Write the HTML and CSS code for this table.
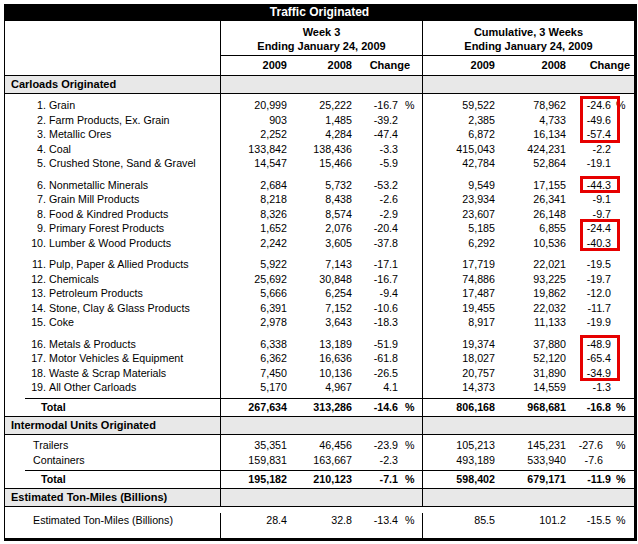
FILE: index.html
```html
<!DOCTYPE html>
<html lang="en">
<head>
<meta charset="utf-8">
<title>Traffic Originated</title>
<link rel="stylesheet" href="styles.css">
</head>
<body>
<div class="sheet">
  <div class="title">Traffic Originated</div>

  <div class="head">
    <div class="h-lab"></div>
    <div class="h-grp wk">Week 3<br>Ending January 24, 2009</div>
    <div class="h-grp cu">Cumulative, 3 Weeks<br>Ending January 24, 2009</div>
    <div class="h-yr">2009</div>
    <div class="h-yr">2008</div>
    <div class="h-yr">Change</div>
    <div class="h-yr">2009</div>
    <div class="h-yr">2008</div>
    <div class="h-yr">Change</div>
  </div>

  <div class="band hd"><div class="lab">Carloads Originated</div><div></div><div></div></div>
  <div class="band g4"><div></div><div></div><div></div></div>

  <div class="row"><div><span class="n">1.</span>Grain</div><div>20,999</div><div>25,222</div><div>-16.7<i class="p">%</i></div><div>59,522</div><div>78,962</div><div class="hl t">-24.6<i class="p">%</i></div></div>
  <div class="row"><div><span class="n">2.</span>Farm Products, Ex. Grain</div><div>903</div><div>1,485</div><div>-39.2</div><div>2,385</div><div>4,733</div><div class="hl">-49.6</div></div>
  <div class="row"><div><span class="n">3.</span>Metallic Ores</div><div>2,252</div><div>4,284</div><div>-47.4</div><div>6,872</div><div>16,134</div><div class="hl b">-57.4</div></div>
  <div class="row"><div><span class="n">4.</span>Coal</div><div>133,842</div><div>138,436</div><div>-3.3</div><div>415,043</div><div>424,231</div><div>-2.2</div></div>
  <div class="row"><div><span class="n">5.</span>Crushed Stone, Sand &amp; Gravel</div><div>14,547</div><div>15,466</div><div>-5.9</div><div>42,784</div><div>52,864</div><div>-19.1</div></div>

  <div class="band g7"><div></div><div></div><div></div></div>

  <div class="row"><div><span class="n">6.</span>Nonmetallic Minerals</div><div>2,684</div><div>5,732</div><div>-53.2</div><div>9,549</div><div>17,155</div><div class="hl t b">-44.3</div></div>
  <div class="row"><div><span class="n">7.</span>Grain Mill Products</div><div>8,218</div><div>8,438</div><div>-2.6</div><div>23,934</div><div>26,341</div><div>-9.1</div></div>
  <div class="row"><div><span class="n">8.</span>Food &amp; Kindred Products</div><div>8,326</div><div>8,574</div><div>-2.9</div><div>23,607</div><div>26,148</div><div>-9.7</div></div>
  <div class="row"><div><span class="n">9.</span>Primary Forest Products</div><div>1,652</div><div>2,076</div><div>-20.4</div><div>5,185</div><div>6,855</div><div class="hl t">-24.4</div></div>
  <div class="row"><div><span class="n">10.</span>Lumber &amp; Wood Products</div><div>2,242</div><div>3,605</div><div>-37.8</div><div>6,292</div><div>10,536</div><div class="hl b">-40.3</div></div>

  <div class="band g7"><div></div><div></div><div></div></div>

  <div class="row"><div><span class="n">11.</span>Pulp, Paper &amp; Allied Products</div><div>5,922</div><div>7,143</div><div>-17.1</div><div>17,719</div><div>22,021</div><div>-19.5</div></div>
  <div class="row"><div><span class="n">12.</span>Chemicals</div><div>25,692</div><div>30,848</div><div>-16.7</div><div>74,886</div><div>93,225</div><div>-19.7</div></div>
  <div class="row"><div><span class="n">13.</span>Petroleum Products</div><div>5,666</div><div>6,254</div><div>-9.4</div><div>17,487</div><div>19,862</div><div>-12.0</div></div>
  <div class="row"><div><span class="n">14.</span>Stone, Clay &amp; Glass Products</div><div>6,391</div><div>7,152</div><div>-10.6</div><div>19,455</div><div>22,032</div><div>-11.7</div></div>
  <div class="row"><div><span class="n">15.</span>Coke</div><div>2,978</div><div>3,643</div><div>-18.3</div><div>8,917</div><div>11,133</div><div>-19.9</div></div>

  <div class="band g7"><div></div><div></div><div></div></div>

  <div class="row"><div><span class="n">16.</span>Metals &amp; Products</div><div>6,338</div><div>13,189</div><div>-51.9</div><div>19,374</div><div>37,880</div><div class="hl t">-48.9</div></div>
  <div class="row"><div><span class="n">17.</span>Motor Vehicles &amp; Equipment</div><div>6,362</div><div>16,636</div><div>-61.8</div><div>18,027</div><div>52,120</div><div class="hl">-65.4</div></div>
  <div class="row"><div><span class="n">18.</span>Waste &amp; Scrap Materials</div><div>7,450</div><div>10,136</div><div>-26.5</div><div>20,757</div><div>31,890</div><div class="hl b">-34.9</div></div>
  <div class="row"><div><span class="n">19.</span>All Other Carloads</div><div>5,170</div><div>4,967</div><div>4.1</div><div>14,373</div><div>14,559</div><div>-1.3</div></div>

  <div class="band g35"><div></div><div></div><div></div></div>

  <div class="row total"><div>Total</div><div>267,634</div><div>313,286</div><div>-14.6<i class="p">%</i></div><div>806,168</div><div>968,681</div><div>-16.8<i class="p">%</i></div></div>

  <div class="band hd"><div class="lab">Intermodal Units Originated</div><div></div><div></div></div>
  <div class="band g3"><div></div><div></div><div></div></div>

  <div class="row plain"><div>Trailers</div><div>35,351</div><div>46,456</div><div>-23.9<i class="p">%</i></div><div>105,213</div><div>145,231</div><div class="sh">-27.6<i class="p">%</i></div></div>
  <div class="row plain"><div>Containers</div><div>159,831</div><div>163,667</div><div>-2.3</div><div>493,189</div><div>533,940</div><div class="sh">-7.6</div></div>

  <div class="band g3"><div></div><div></div><div></div></div>

  <div class="row total"><div>Total</div><div>195,182</div><div>210,123</div><div>-7.1<i class="p">%</i></div><div>598,402</div><div>679,171</div><div>-11.9<i class="p">%</i></div></div>

  <div class="band hd"><div class="lab">Estimated Ton-Miles (Billions)</div><div></div><div></div></div>

  <div class="row plain est"><div>Estimated Ton-Miles (Billions)</div><div>28.4</div><div>32.8</div><div>-13.4<i class="p">%</i></div><div>85.5</div><div>101.2</div><div>-15.5<i class="p">%</i></div></div>
</div>
</body>
</html>
```

FILE: styles.css
```css
* { box-sizing: border-box; }

html, body {
  margin: 0;
  padding: 0;
  background: #fff;
}

body {
  font-family: "Liberation Sans", Arial, sans-serif;
  font-size: 10.7px;
  color: #000;
}

.sheet {
  width: 633px;
  margin: 4px 0 0 4px;
  border-left: 1px solid #000;
  border-right: 3px solid #000;
  border-bottom: 3px solid #000;
}

.title {
  height: 17px;
  line-height: 17px;
  background: #000;
  color: #fff;
  font-weight: bold;
  font-size: 12px;
  text-align: center;
}

/* ---------- column header ---------- */
.head {
  display: grid;
  grid-template-columns: 216px 74px 65px 63px 82px 70px 59px;
  grid-template-rows: 35px 19px;
  border-bottom: 1px solid #000;
  font-weight: bold;
  font-size: 11px;
}

.h-lab {
  grid-row: 1 / 3;
  border-right: 1px solid #000;
}

.h-grp {
  text-align: center;
  padding-top: 4px;
  line-height: 14px;
  border-bottom: 1px solid #000;
}

.h-grp.wk {
  grid-column: 2 / 5;
  border-right: 1px solid #000;
}

.h-grp.cu {
  grid-column: 5 / 8;
}

.h-yr {
  line-height: 19px;
  text-align: right;
  white-space: nowrap;
}

.h-yr:nth-child(4) { padding-right: 8px; }
.h-yr:nth-child(5) { padding-right: 8px; }
.h-yr:nth-child(6) { padding-right: 12px; border-right: 1px solid #000; }
.h-yr:nth-child(7) { padding-right: 10px; }
.h-yr:nth-child(8) { padding-right: 9px; }
.h-yr:nth-child(9) { padding-right: 4px; }

/* ---------- bands: section headings and spacers ---------- */
.band {
  display: grid;
  grid-template-columns: 216px 202px 211px;
}

.band > :nth-child(1),
.band > :nth-child(2) {
  border-right: 1px solid #000;
}

.band.hd {
  height: 18px;
  line-height: 17px;
  border-bottom: 1px solid #000;
  background: #e8e8e8;
  font-weight: bold;
  font-size: 11px;
  white-space: nowrap;
}

.band.hd .lab { padding-left: 6px; }

.band.g3 { height: 3px; }
.band.g35 { height: 3.5px; }
.band.g4 { height: 4px; }
.band.g7 { height: 7px; }

/* ---------- data rows ---------- */
.row {
  display: grid;
  grid-template-columns: 216px 74px 65px 63px 82px 70px 59px;
  height: 14.5px;
  line-height: 14.5px;
}

.row > div {
  white-space: nowrap;
  text-align: right;
}

.row > :nth-child(1) {
  text-align: left;
  padding-left: 23px;
  border-right: 1px solid #000;
}

.row > :nth-child(2) { padding-right: 8px; }
.row > :nth-child(3) { padding-right: 8px; }
.row > :nth-child(4) { padding-right: 24px; border-right: 1px solid #000; }
.row > :nth-child(5) { padding-right: 10px; }
.row > :nth-child(6) { padding-right: 9px; }
.row > :nth-child(7) { padding-right: 23px; position: relative; }
.row > :nth-child(7).sh { padding-right: 31px; }

.n {
  display: inline-block;
  width: 18px;
  margin-right: 3px;
  text-align: right;
}

.p {
  font-style: normal;
  display: inline-block;
  width: 24px;
  margin-right: -24px;
  padding-left: 7px;
  text-align: left;
}

.row > :nth-child(7) .p {
  width: 23px;
  margin-right: -23px;
  padding-left: 5px;
}

.row > :nth-child(7).sh .p {
  width: 31px;
  margin-right: -31px;
  padding-left: 13px;
}

.row.plain > :nth-child(1) { padding-left: 28px; }

.row.total {
  height: 19px;
  line-height: 17px;
  border-bottom: 1px solid #000;
  font-weight: bold;
}

.row.total > div { border-top: 1px solid #000; }

.row.total > :nth-child(1) {
  margin-left: 20px;
  padding-left: 16px;
}

.row.est {
  height: 31px;
  padding-top: 6px;
}

/* ---------- red annotation boxes ---------- */
.hl::after {
  content: "";
  position: absolute;
  left: 5px;
  width: 34px;
  top: 0;
  bottom: 0;
  border-left: 3px solid #e60000;
  border-right: 3px solid #e60000;
}

.hl.t::after {
  top: -2px;
  border-top: 3px solid #e60000;
}

.hl.b::after {
  bottom: -1px;
  border-bottom: 3px solid #e60000;
}
```
